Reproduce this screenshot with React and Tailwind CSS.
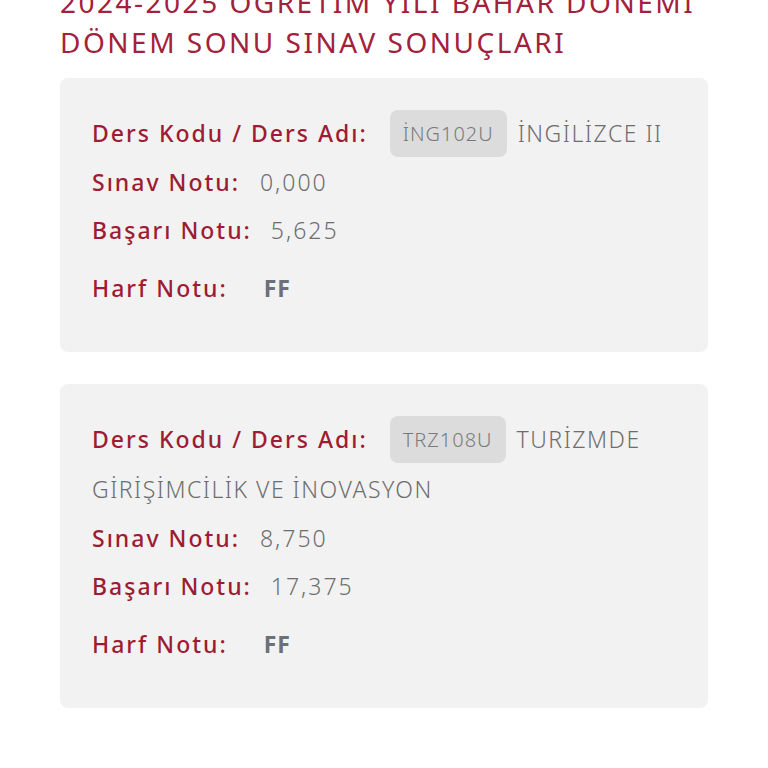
import React from "react";

const font = { fontFamily: "'Noto Sans', sans-serif" };

function Card({ code, name, sinav, basari, harf }) {
  return (
    <div className="rounded-lg bg-[#f2f2f2] px-[32px] pt-[30px] pb-[40px] text-[23px] tracking-[2px]">
      <div className="leading-[50px]">
        <span className="font-medium text-[#9e1c33]">Ders Kodu / Ders Adı:</span>
        <span className="ml-[22px] -mt-[6px] -mb-[2px] inline-block h-[47px] rounded-lg bg-[#dcdcdc] px-[13px] align-middle text-[20px] font-light leading-[47px] tracking-[1px] text-[#7a7a7a]">
          {code}
        </span>
        <span className="ml-[11px] font-light tracking-[1.5px] text-[#6e6e6e]">{name}</span>
      </div>
      <div className="leading-[48px]">
        <span className="font-medium text-[#9e1c33]">Sınav Notu:</span>
        <span className="ml-[20px] font-light text-[#6e6e6e]">{sinav}</span>
      </div>
      <div className="leading-[48px]">
        <span className="font-medium text-[#9e1c33]">Başarı Notu:</span>
        <span className="ml-[19px] font-light text-[#6e6e6e]">{basari}</span>
      </div>
      <div className="mt-[10px] leading-[48px]">
        <span className="font-medium text-[#9e1c33]">Harf Notu:</span>
        <span className="ml-[36px] font-bold tracking-[1px] text-[#6b7079]">{harf}</span>
      </div>
    </div>
  );
}

export default function App() {
  return (
    <div className="min-h-[768px] w-full overflow-hidden bg-white" style={font}>
      <div className="px-[60px]">
        <h1 className="-mt-[18px] mb-[16px] text-[28px] font-normal leading-[40px] tracking-[2.5px] text-[#a3213b]">
          2024-2025 ÖĞRETİM YILI BAHAR DÖNEMİ
          <br />
          DÖNEM SONU SINAV SONUÇLARI
        </h1>
        <div className="flex flex-col gap-[32px]">
          <Card code="İNG102U" name="İNGİLİZCE II" sinav="0,000" basari="5,625" harf="FF" />
          <Card
            code="TRZ108U"
            name="TURİZMDE GİRİŞİMCİLİK VE İNOVASYON"
            sinav="8,750"
            basari="17,375"
            harf="FF"
          />
        </div>
      </div>
    </div>
  );
}
